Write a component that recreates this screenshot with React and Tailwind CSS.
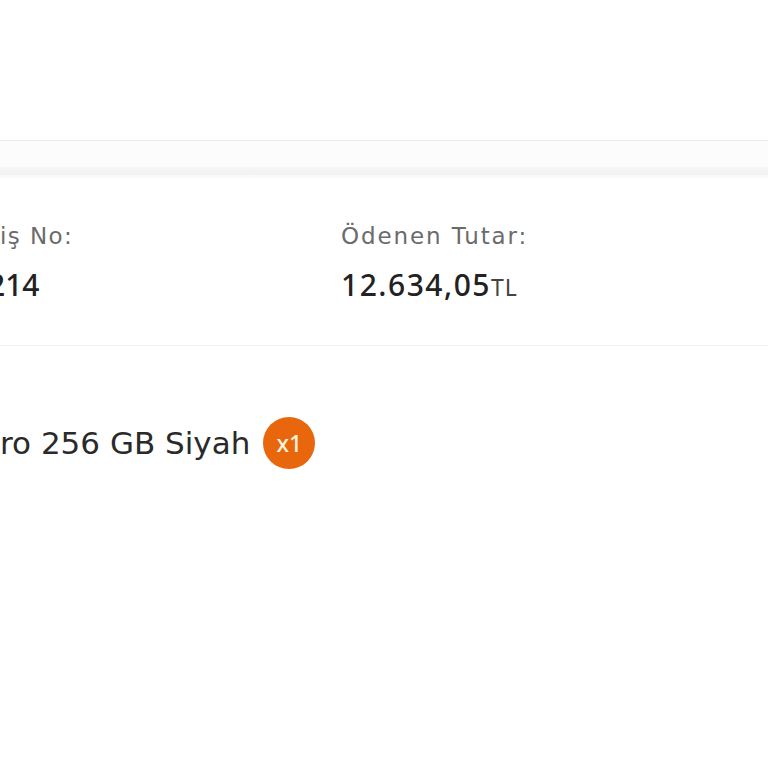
import React from 'react';

const labelFont = { fontFamily: '"DejaVu Sans", "Noto Sans", sans-serif' };
const numFont = { fontFamily: '"Noto Sans", "Open Sans", sans-serif' };

const App = () => {
  return (
    <div className="w-[768px] h-[768px] overflow-hidden bg-white" style={labelFont}>
      {/* empty top area */}
      <div className="h-[140px]" />
      <div className="h-px bg-[#e9e9e9]" />

      {/* tab strip shadow band */}
      <div className="flex flex-col">
        <div className="h-[26px] bg-[#fcfcfc]" />
        <div className="h-[8px] bg-gradient-to-b from-[#f6f6f6] to-[#f2f2f2]" />
        <div className="h-[3px] bg-[#fafafa]" />
      </div>

      {/* order summary (left column cut by the viewport) */}
      <div className="h-[168px] border-b border-[#efefef] bg-white pt-[42px]">
        <div className="flex">
          <div className="w-[341px] shrink-0">
            <div className="text-[23px] leading-[33px] tracking-[1.4px] text-[#6b6b6b] whitespace-nowrap">iş No:</div>
            <div className="mt-[14px] -ml-[12px] text-[30px] leading-[36px] font-medium text-[#222]" style={numFont}>
              214
            </div>
          </div>
          <div>
            <div className="text-[23px] leading-[33px] tracking-[1.9px] text-[#6b6b6b] whitespace-nowrap">Ödenen Tutar:</div>
            <div className="mt-[14px] flex items-baseline whitespace-nowrap text-[#222]" style={numFont}>
              <span className="text-[30px] leading-[36px] font-medium tracking-[1.5px]">12.634,05</span>
              <span className="text-[23px] leading-[36px] tracking-[1px] text-[#444]">TL</span>
            </div>
          </div>
        </div>
      </div>

      {/* product row */}
      <div className="mt-[71px] flex items-center gap-[13px]">
        <span className="whitespace-nowrap text-[31px] leading-[52px] text-[#2a2a2a]">ro 256 GB Siyah</span>
        <span className="shrink-0 w-[52px] h-[52px] rounded-full bg-[#e8660c] flex items-center justify-center text-[23px] font-medium text-[#fff3df]" style={numFont}>
          x1
        </span>
      </div>
    </div>
  );
};

export default App;
